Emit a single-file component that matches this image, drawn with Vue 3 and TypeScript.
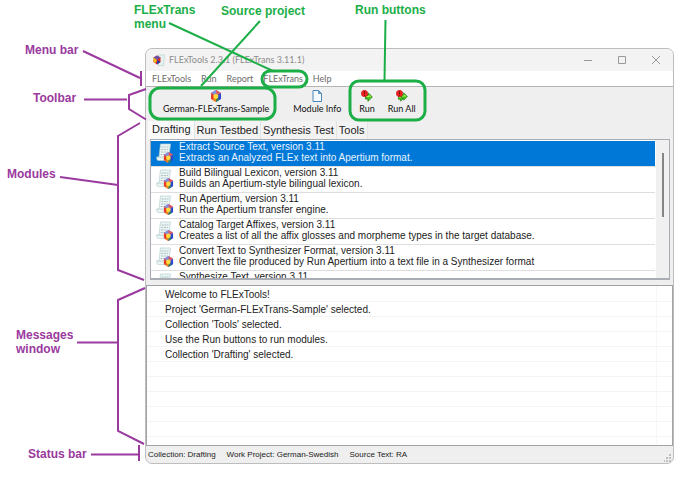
<script setup lang="ts">
import { ref } from 'vue'

interface Module {
  title: string
  description: string
}
interface Callout {
  x: number
  y: number
  text: string
  tone: 'green' | 'purple'
}

const menus = ['FLExTools', 'Run', 'Report', 'FLExTrans', 'Help']
const tabs = ['Drafting', 'Run Testbed', 'Synthesis Test', 'Tools']
const activeTab = ref(0)
const selected = ref(0)

const modules: Module[] = [
  { title: 'Extract Source Text, version 3.11', description: 'Extracts an Analyzed FLEx text into Apertium format.' },
  { title: 'Build Bilingual Lexicon, version 3.11', description: 'Builds an Apertium-style bilingual lexicon.' },
  { title: 'Run Apertium, version 3.11', description: 'Run the Apertium transfer engine.' },
  { title: 'Catalog Target Affixes, version 3.11', description: 'Creates a list of all the affix glosses and morpheme types in the target database.' },
  { title: 'Convert Text to Synthesizer Format, version 3.11', description: 'Convert the file produced by Run Apertium into a text file in a Synthesizer format' },
  { title: 'Synthesize Text, version 3.11', description: '' },
]

const messages = [
  'Welcome to FLExTools!',
  "Project 'German-FLExTrans-Sample' selected.",
  "Collection 'Tools' selected.",
  'Use the Run buttons to run modules.',
  "Collection 'Drafting' selected.",
  '', '', '', '', '',
]

const status = ['Collection: Drafting', 'Work Project: German-Swedish', 'Source Text: RA']

const callouts: Callout[] = [
  { x: 134, y: 14, text: 'FLExTrans', tone: 'green' },
  { x: 134, y: 28, text: 'menu', tone: 'green' },
  { x: 221, y: 15, text: 'Source project', tone: 'green' },
  { x: 355, y: 14, text: 'Run buttons', tone: 'green' },
  { x: 25, y: 54, text: 'Menu bar', tone: 'purple' },
  { x: 33, y: 102, text: 'Toolbar', tone: 'purple' },
  { x: 7, y: 178, text: 'Modules', tone: 'purple' },
  { x: 16, y: 339, text: 'Messages', tone: 'purple' },
  { x: 16, y: 353, text: 'window', tone: 'purple' },
  { x: 28, y: 458, text: 'Status bar', tone: 'purple' },
]
</script>

<template>
  <main class="figure">
    <svg class="defs" aria-hidden="true">
      <defs>
        <symbol id="gem" viewBox="0 0 12 12">
          <path d="M6 0 11 3 6 6 1 3Z" fill="#a868b8" />
          <path d="M6 0 11 3 8.500 5 6 3Z" fill="#dc5a60" />
          <path d="M1 3 6 0 6 3 3.500 5Z" fill="#7f92de" />
          <path d="M1 3 3.500 4.500 6 7 6 12 1 9Z" fill="#e83a28" />
          <path d="M11 3 8.500 4.500 6 7 6 12 11 9Z" fill="#2c48d0" />
          <path d="M6 3.500 8.500 5.500 8 8 6 9.500 3.500 8 3.500 5Z" fill="#ffdc3c" />
          <path d="M3.500 8 6 9.500 6 12 2.500 10Z" fill="#f08a20" />
          <path d="M6 9.500 8 8 9 10.200 6 12Z" fill="#3a8a50" />
        </symbol>
        <symbol id="script" viewBox="0 0 18 20">
          <path d="M4.500 1H14.500L13 12.500V17.500H2.500Q.8 17.500.8 15.800V14H3Z" fill="#ebf5f4" stroke="#b4d0d0" stroke-width=".7" />
          <path d="M.8 14H10.500V16Q10.500 17.500 12 17.500" fill="#dceceb" stroke="#b4d0d0" stroke-width=".6" />
          <path d="M5.500 4H12.500M5.200 6.500H12M5 9H11.700M4.700 11.500H10" fill="none" stroke="#a9bcbe" stroke-width=".9" stroke-dasharray="2 .7" />
        </symbol>
        <symbol id="arrow" viewBox="0 0 8 10">
          <path d="M.5 3H3V.7L7.300 5 3 9.300V7H.5Z" fill="#4cc820" stroke="#1f7a12" stroke-width=".8" />
          <path d="M1.500 4.500H4V3.500L5.800 5" fill="none" stroke="#b8f860" stroke-width=".9" />
        </symbol>
        <symbol id="alert" viewBox="0 0 8 8">
          <path d="M2.400.4H5.600L7.600 2.400V5.600L5.600 7.600H2.400L.4 5.600V2.400Z" fill="#ee2020" stroke="#b01414" stroke-width=".5" />
          <path d="M4 1.500V4.700M4 5.500V6.500" stroke="#601010" stroke-width="1" />
        </symbol>
      </defs>
    </svg>

    <section class="window">
      <header class="titlebar">
        <svg class="app-icon" viewBox="0 0 12 13" aria-hidden="true">
          <path d="M5 1H11.500L10.500 11.500H5Z" fill="#e6f2f2" stroke="#b5cccc" stroke-width=".6" />
          <path d="M4 1.500 7.500 3.500V8L4 10.500.5 8V3.500Z" fill="#e02820" />
          <path d="M4 1.500 7.500 3.500 4 6 .5 3.500Z" fill="#6a50a8" />
          <path d="M.5 3.500 4 6 2.500 9 .5 8Z" fill="#f0c020" />
          <path d="M4 6 7.500 8 4 10.500Z" fill="#2040b0" />
        </svg>
        <h1>FLExTools 2.3.1 (FLExTrans 3.11.1)</h1>
        <div class="controls">
          <button type="button" aria-label="Minimize"><svg viewBox="0 0 10 10"><path d="M1 5.500H9" /></svg></button>
          <button type="button" aria-label="Maximize"><svg viewBox="0 0 10 10"><path d="M1.500 1.500H8.500V8.500H1.500Z" /></svg></button>
          <button type="button" aria-label="Close"><svg viewBox="0 0 10 10"><path d="M1 1 9 9M9 1 1 9" /></svg></button>
        </div>
      </header>

      <nav class="menubar">
        <button v-for="m in menus" :key="m" type="button">{{ m }}</button>
      </nav>

      <div class="toolbar">
        <button type="button" class="project">
          <svg viewBox="0 0 12 12"><use href="#gem" /></svg>
          <span>German-FLExTrans-Sample</span>
        </button>
        <button type="button" class="info">
          <svg viewBox="0 0 12 12">
            <path d="M2 .5H7.500L10.500 3.500V11.500H2Z" fill="#f4faff" stroke="#4a86b8" />
            <path d="M7.500.5V3.500H10.500Z" fill="#4ea0dc" stroke="#3a78ac" stroke-width=".6" />
          </svg>
          <span>Module Info</span>
        </button>
        <button type="button" class="run">
          <svg viewBox="0 0 12 12">
            <use href="#arrow" x="4" y="2" width="8" height="10" />
            <use href="#alert" x="0" y="0" width="7" height="7" />
          </svg>
          <span>Run</span>
        </button>
        <button type="button">
          <svg viewBox="0 0 12 12">
            <use href="#arrow" x="2" y="3" width="7" height="9" />
            <use href="#arrow" x="5" y="2" width="7" height="9" />
            <use href="#alert" x="0" y="0" width="7" height="7" />
          </svg>
          <span>Run All</span>
        </button>
      </div>

      <div class="tabs" role="tablist">
        <button
          v-for="(t, i) in tabs"
          :key="t"
          type="button"
          role="tab"
          :aria-selected="i === activeTab"
          :class="{ active: i === activeTab }"
          @click="activeTab = i"
        >{{ t }}</button>
      </div>

      <div class="modules">
        <ul>
          <li v-for="(m, i) in modules" :key="m.title" :class="{ selected: i === selected }" @click="selected = i">
            <svg class="module-icon" viewBox="0 0 18 20" aria-hidden="true">
              <use href="#script" width="18" height="20" />
              <use href="#gem" x="7" y="9" width="11" height="11" />
            </svg>
            <div>
              <p>{{ m.title }}</p>
              <p>{{ m.description }}</p>
            </div>
          </li>
        </ul>
        <div class="scroll"><span></span></div>
      </div>

      <div class="messages">
        <ul>
          <li v-for="(m, i) in messages" :key="i">{{ m }}</li>
        </ul>
        <div class="column"></div>
      </div>

      <footer class="statusbar">
        <span v-for="s in status" :key="s">{{ s }}</span>
        <svg class="grip" viewBox="0 0 8 8" aria-hidden="true">
          <path d="M5 0h2v2H5zM5 3h2v2H5zM2 3h2v2H2zM5 6h2v2H5zM2 6h2v2H2zM0 6h1v2H0z" fill="#c0c0c0" />
        </svg>
      </footer>
    </section>

    <svg class="callouts" width="691" height="480" viewBox="0 0 691 480">
      <g class="green-lines">
        <path d="M169 23 273 71M260 21 201 86" />
        <path d="M385.500 20 384.500 80" />
        <rect x="262" y="71" width="45" height="16" rx="8" stroke-width="3" />
        <rect x="150" y="88" width="125" height="31" rx="10" stroke-width="3" />
        <rect x="350" y="81" width="75" height="39" rx="9" stroke-width="3" />
      </g>
      <g class="purple-lines">
        <path d="M83 51 140 78M141 71V86" />
        <path d="M84 99.500H127M146 89 129 95V109L146 119.500" />
        <path d="M140 123 118 136V270L144 280M60 177 118 185" />
        <path d="M145 288 118 300V431L144 444M77 342.500H118" />
        <path d="M91 454.500H139M139 445V461" />
      </g>
      <text v-for="c in callouts" :key="c.text" :x="c.x" :y="c.y" :class="c.tone">{{ c.text }}</text>
    </svg>
  </main>
</template>

<style>
body {
  background: #fff;
}
</style>

<style scoped>
.figure {
  position: relative;
  box-sizing: border-box;
  padding: 48px 17px 16px 145px;
  font-family: "Liberation Sans", Arial, sans-serif;
  font-size: 10px;
  color: #222;
}
.defs {
  position: absolute;
  width: 0;
  height: 0;
}
button {
  margin: 0;
  padding: 0;
  border: 0;
  background: none;
  color: inherit;
  font: inherit;
  white-space: nowrap;
}
ul, p, h1 {
  margin: 0;
  padding: 0;
  list-style: none;
}
.window {
  overflow: hidden;
  border: 1px solid #bdbdbd;
  border-radius: 7px;
  background: #efefef;
}
.titlebar {
  display: flex;
  align-items: center;
  height: 22px;
  padding-left: 7px;
  background: #f3f3f3;
  font-family: Lato, sans-serif;
  color: #8c8c8c;
}
.app-icon {
  width: 12px;
  height: 13px;
}
.titlebar h1 {
  padding-left: 4px;
  font-size: 9px;
  font-weight: 400;
  line-height: 12px;
}
.controls {
  display: flex;
  gap: 24px;
  margin-left: auto;
  padding-right: 12px;
}
.controls svg {
  display: block;
  width: 10px;
  height: 10px;
  fill: none;
  stroke: #999;
}
.menubar {
  display: flex;
  gap: 10px;
  height: 15px;
  padding-left: 6px;
  border-bottom: 1px solid #b5b5b5;
  background: #fff;
  font-family: Lato, sans-serif;
  font-size: 9px;
  color: #6c6c6c;
}
.toolbar {
  display: flex;
  gap: 13px;
  height: 34px;
  padding-left: 17px;
  font-family: Lato, sans-serif;
  font-size: 9px;
  color: #111;
}
.toolbar button {
  display: flex;
  flex-direction: column;
  align-items: center;
  padding-top: 3px;
  line-height: 12px;
}
.toolbar svg {
  width: 12px;
  height: 12px;
}
.toolbar .project {
  margin-right: 11px;
}
.toolbar .info {
  margin-right: 5px;
}
.toolbar button span {
  margin-top: 1px;
}
.tabs {
  display: flex;
  height: 18px;
  padding-left: 2px;
  font-size: 11px;
}
.tabs button {
  padding: 0 2px;
  border-right: 1px solid #e4e4e4;
  background: #f3f3f3;
}
.tabs .active {
  padding: 0 3px 2px 4px;
  background: #fafafa;
}
.modules {
  display: flex;
  height: 138px;
  margin: 0 3px 0 4px;
  border: 1px solid #a9acb3;
  border-width: 1px 1px 2px;
  overflow: hidden;
  background: #fff;
}
.modules ul {
  flex: 1;
  min-width: 0;
  padding-top: 1px;
}
.modules li {
  display: flex;
  gap: 5px;
  box-sizing: border-box;
  height: 26px;
  padding-left: 5px;
  border-bottom: 1px solid #dedede;
  line-height: 11px;
  white-space: nowrap;
}
.modules li.selected {
  background: #0078d7;
  color: #e8f4ff;
}
.module-icon {
  flex: none;
  width: 18px;
  height: 20px;
  margin-top: 2px;
}
.scroll {
  width: 13px;
  margin-left: 1px;
  background: #f0f0f0;
}
.scroll span {
  display: block;
  width: 2px;
  height: 64px;
  margin: 13px auto 0;
  background: #858585;
}
.messages {
  display: flex;
  height: 159px;
  margin-top: 5px;
  border: 1px solid #a0a2a8;
  overflow: hidden;
  background: #fff;
}
.messages ul {
  flex: 1;
  padding-top: 1px;
}
.messages li {
  box-sizing: border-box;
  height: 15px;
  padding-left: 18px;
  border-bottom: 1px solid #f4f4f4;
  line-height: 16px;
}
.messages .column {
  width: 15px;
  border-left: 1px solid #f6f6f6;
  background: repeating-linear-gradient(#fff 0 14px, #f4f4f4 14px 15px);
  background-position: 0 1px;
}
.statusbar {
  display: flex;
  align-items: center;
  gap: 11px;
  height: 17px;
  padding-left: 2px;
  font-size: 8px;
}
.grip {
  width: 8px;
  height: 8px;
  margin: 7px 1px 0 auto;
}
.callouts {
  position: absolute;
  top: 0;
  left: 0;
  fill: none;
  pointer-events: none;
}
.callouts text {
  font-size: 12px;
  font-weight: 700;
}
.green-lines {
  stroke: #1cae47;
  stroke-width: 2;
}
.purple-lines {
  stroke: #9a3a9e;
  stroke-width: 2;
}
.green {
  fill: #1cae47;
}
.purple {
  fill: #9a3a9e;
}
</style>
